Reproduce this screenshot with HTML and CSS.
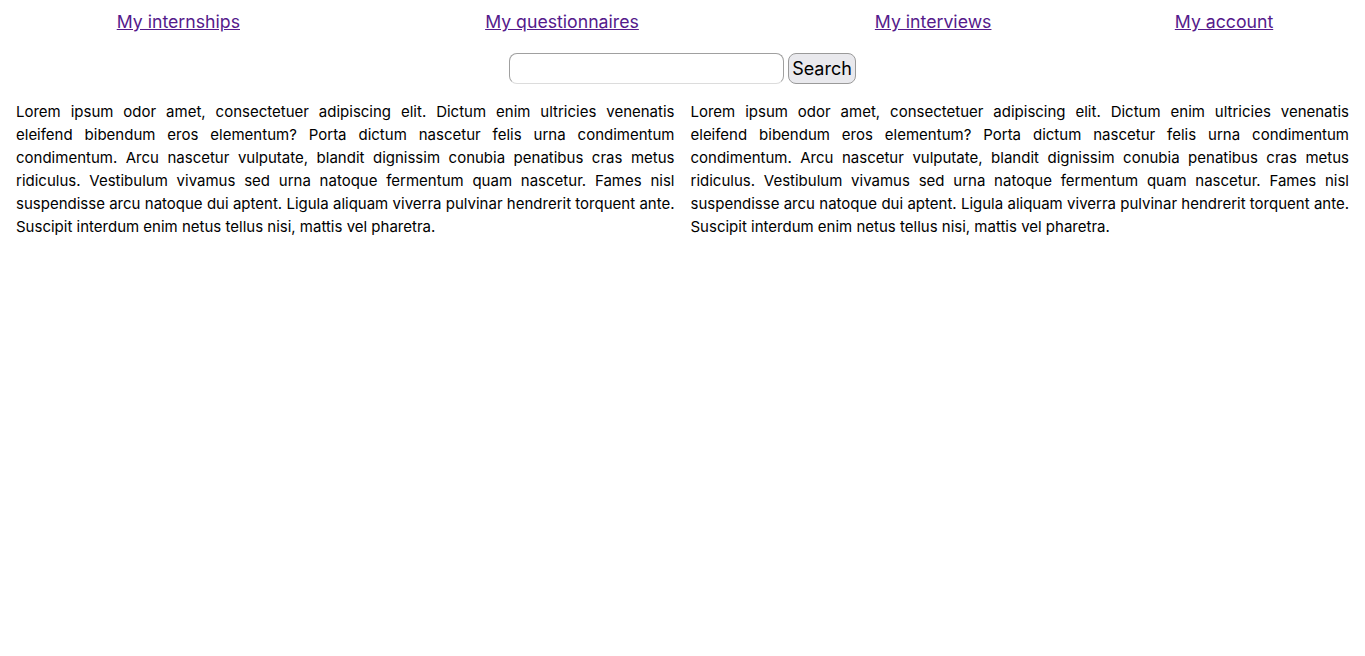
FILE: index.html
```
<!DOCTYPE html>
<html>
<head>
<meta charset="utf-8">
<link rel="stylesheet" href="styles.css">
</head>
<body>
<nav class="nav">
  <div class="nav-item"><a href="#">My internships</a></div>
  <div class="nav-item"><a href="#">My questionnaires</a></div>
  <div class="nav-item"><a href="#">My interviews</a></div>
  <div class="nav-item"><a href="#">My account</a></div>
</nav>
<form class="search">
  <input class="search-input" type="text">
  <button class="search-btn" type="button">Search</button>
</form>
<main class="cols">
  <p class="col">Lorem ipsum odor amet, consectetuer adipiscing elit. Dictum enim ultricies venenatis eleifend bibendum eros elementum? Porta dictum nascetur felis urna condimentum condimentum. Arcu nascetur vulputate, blandit dignissim conubia penatibus cras metus ridiculus. Vestibulum vivamus sed urna natoque fermentum quam nascetur. Fames nisl suspendisse arcu natoque dui aptent. Ligula aliquam viverra pulvinar hendrerit torquent ante. Suscipit interdum enim netus tellus nisi, mattis vel pharetra.</p>
  <p class="col">Lorem ipsum odor amet, consectetuer adipiscing elit. Dictum enim ultricies venenatis eleifend bibendum eros elementum? Porta dictum nascetur felis urna condimentum condimentum. Arcu nascetur vulputate, blandit dignissim conubia penatibus cras metus ridiculus. Vestibulum vivamus sed urna natoque fermentum quam nascetur. Fames nisl suspendisse arcu natoque dui aptent. Ligula aliquam viverra pulvinar hendrerit torquent ante. Suscipit interdum enim netus tellus nisi, mattis vel pharetra.</p>
</main>
</body>
</html>
```

FILE: styles.css
```
body {
  margin: 8px;
  font-family: Inter, "Noto Sans", sans-serif;
  color: #000;
  background: #fff;
}
.nav {
  display: grid;
  grid-template-columns: 123fr 154fr 114fr 96fr;
  align-items: center;
  height: 27px;
}
.nav-item {
  text-align: center;
  font-size: 17.7px;
}
.nav-item a {
  color: #551a8b;
  text-decoration: underline;
}
.search {
  display: flex;
  justify-content: center;
  align-items: center;
  gap: 4px;
  margin-top: 18px;
}
.search-input {
  width: 275px;
  height: 31px;
  box-sizing: border-box;
  border: 1px solid #a0a0a0;
  border-bottom-color: #dcdcdc;
  border-radius: 8px;
  padding: 0 6px;
  font-family: inherit;
  font-size: 16px;
}
.search-btn {
  height: 31px;
  box-sizing: border-box;
  padding: 0 3px;
  border: 1px solid #9a9a9a;
  border-radius: 8px;
  background: #e9e9ed;
  font-family: inherit;
  font-size: 18px;
  color: #000;
}
.cols {
  display: grid;
  grid-template-columns: 1fr 1fr;
  margin-top: 16px;
}
.col {
  margin: 0;
  padding: 0 8px;
  text-align: justify;
  font-size: 15px;
  line-height: 23px;
}
```
